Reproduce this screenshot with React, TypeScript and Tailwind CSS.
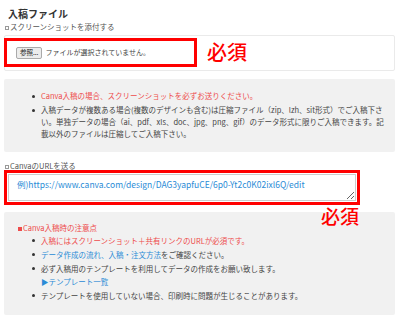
const font = { fontFamily: '"Noto Sans CJK JP", "Noto Sans", sans-serif' }

function Square() {
  return <span className="mr-[1px] inline-block h-[4px] w-[4px] border border-[#999] align-middle" />
}

function Bullet(props: { children: React.ReactNode; className?: string }) {
  return (
    <li className={`relative pl-[9px] ${props.className ?? ''}`}>
      <span className="absolute left-0 top-[5px] h-[3px] w-[3px] rounded-full bg-[#333]" />
      {props.children}
    </li>
  )
}

export default function App() {
  return (
    <div className="h-[324px] w-[400px] overflow-hidden bg-white pl-[4px] pr-[5px] text-[#444]" style={font}>
      <h2 className="pl-[4px] pt-[7px] text-[10px] font-bold leading-[14px] text-[#333]">入稿ファイル</h2>
      <p className="mt-[1px] pl-[1px] text-[7.5px] leading-[10px] text-[#555]">
        <Square />
        スクリーンショットを添付する
      </p>

      <div className="mt-[3px] flex h-[36px] items-start rounded-[2px] border border-[#eaeaea] bg-white pt-[2px]">
        <div className="-ml-[1px] flex h-[29px] w-[193px] items-center border-[3px] border-[#ff0000] pl-[9px]">
          <span className="flex h-[12px] items-center rounded-[2px] border border-[#aaa] bg-[#ececec] px-[3px] text-[6.5px] leading-none text-[#222]">
            参照...
          </span>
          <span className="ml-[3px] text-[7px] leading-none text-[#444]">ファイルが選択されていません。</span>
        </div>
        <span className="ml-[10px] mt-[3px] text-[20px] font-medium leading-[22px] text-[#ff0000]">必須</span>
      </div>

      <div className="mt-[8px] rounded-[2px] bg-[#f1f1f1] pb-[12px] pl-[28px] pr-[6px] pt-[11px] text-[7.5px] leading-[12px]">
        <ul>
          <Bullet className="mb-[2px] text-[#ee4b4b]">Canva入稿の場合、スクリーンショットを必ずお送りください。</Bullet>
          <Bullet className="whitespace-nowrap">
            入稿データが複数ある場合(複数のデザインも含む)は圧縮ファイル（zip、lzh、sit形式）でご入稿下さ
            <br />
            い。単独データの場合（ai、pdf、xls、doc、jpg、png、gif）のデータ形式に限りご入稿できます。記
            <br />
            載以外のファイルは圧縮してご入稿下さい。
          </Bullet>
        </ul>
      </div>

      <p className="mt-[9px] pl-[1px] text-[7.5px] leading-[10px] text-[#555]">
        <Square />
        CanvaのURLを送る
      </p>

      <div className="mt-[-1px] w-[356px] border-[3px] border-[#ff0000] p-[1px]">
        <textarea
          readOnly
          value="例)https://www.canva.com/design/DAG3yapfuCE/6p0-Yt2c0K02ixl6Q/edit"
          className="block h-[27px] w-full resize-y border border-[#ccc] bg-white px-[8px] pt-[3px] text-[8.5px] leading-[12px] text-[#2a8bd6] outline-none"
          style={font}
        />
      </div>
      <div className="relative z-10 -mb-[15px] flex w-[356px] justify-end pr-[1px]">
        <span className="text-[19px] font-medium leading-[22px] text-[#ff0000]">必須</span>
      </div>

      <div className="rounded-[2px] bg-[#f1f1f1] pb-[13px] pl-[14px] pr-[6px] pt-[10px] text-[7.5px] leading-[12px]">
        <p className="text-[#ee4b4b]">
          <span className="mr-[1px] inline-block h-[4px] w-[4px] bg-[#ee4b4b] align-middle" />
          Canva入稿時の注意点
        </p>
        <ul className="pl-[14px] leading-[13px]">
          <Bullet className="mb-[1px] text-[#ee4b4b]">入稿にはスクリーンショット＋共有リンクのURLが必須です。</Bullet>
          <Bullet className="mb-[1px]">
            <span className="text-[#2a8bd6]">データ作成の流れ、入稿・注文方法</span>をご確認ください。
          </Bullet>
          <Bullet className="mb-[1px]">
            必ず入稿用のテンプレートを利用してデータの作成をお願い致します。
            <br />
            <span className="text-[#2a8bd6]">▶テンプレート一覧</span>
          </Bullet>
          <Bullet>テンプレートを使用していない場合、印刷時に問題が生じることがあります。</Bullet>
        </ul>
      </div>
    </div>
  )
}
